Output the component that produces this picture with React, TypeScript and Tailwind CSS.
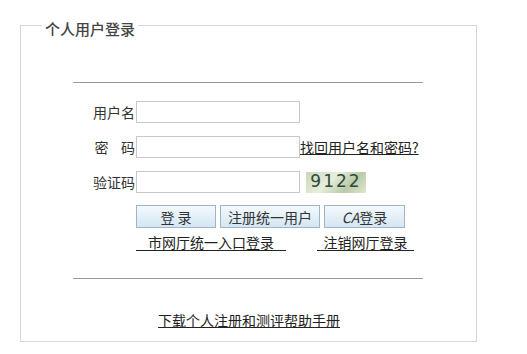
import React from "react";

const font = { fontFamily: '"SimSun", "Noto Sans CJK SC", sans-serif' };

function Field({ label, children }: { label: React.ReactNode; children?: React.ReactNode }) {
  return (
    <div className="flex h-[22px] items-center">
      <div className="w-[65px] text-right text-[14px] leading-none text-[#333] pr-[1px]">{label}</div>
      <input className="h-[22px] w-[164px] border border-[#c8c8c8] bg-white outline-none" />
      {children}
    </div>
  );
}

function Btn({ children, w }: { children: React.ReactNode; w: string }) {
  return (
    <button
      className={`h-[23px] ${w} border border-[#9fb6c8] bg-gradient-to-b from-[#f4f9fd] to-[#d4e6f3] text-[14px] leading-none text-[#333]`}
    >
      {children}
    </button>
  );
}

export default function App() {
  return (
    <div className="h-[354px] w-[527px] bg-white pt-[16px]" style={font}>
      <fieldset className="ml-[20px] h-[326px] w-[457px] border border-[#d6d6d6] px-0">
        <legend className="ml-[21px] px-[3px] text-[15px] leading-[18px] text-[#444] font-medium">
          <span className="inline-block translate-y-[4px]">个人用户登录</span>
        </legend>

        <div className="ml-[52px] mt-[48px] h-[2px] w-[350px] border-t border-[#9a9a9a]" />

        <div className="mt-[17px] ml-[50px] flex flex-col gap-[13px]">
          <Field label="用户名" />
          <Field label={<span>密&nbsp;&nbsp;&nbsp;&nbsp;码</span>}>
            <a className="text-[14px] leading-none text-[#222] underline">找回用户名和密码?</a>
          </Field>
          <Field label="验证码">
            <div
              className="ml-[6px] flex h-[21px] w-[60px] items-center justify-center bg-[linear-gradient(135deg,#c9d7b8,#e8eedc_40%,#b9cba8_70%,#dfe8d2)] text-[17px] tracking-[2px] text-[#2f4a3a]"
              style={{ fontFamily: '"DejaVu Sans", sans-serif' }}
            >
              9122
            </div>
          </Field>
        </div>

        <div className="ml-[115px] mt-[12px] flex gap-[4px]">
          <Btn w="w-[80px]">登 录</Btn>
          <Btn w="w-[100px]">注册统一用户</Btn>
          <Btn w="w-[81px]">
            <span className="italic">CA</span>登录
          </Btn>
        </div>

        <div className="ml-[115px] mt-[7px] flex text-[14px] leading-none text-[#222]">
          <a className="w-[150px] border-b border-[#222] pb-[1px] text-center">市网厅统一入口登录</a>
          <a className="ml-[31px] w-[97px] border-b border-[#222] pb-[1px] text-center">注销网厅登录</a>
        </div>

        <div className="ml-[52px] mt-[27px] h-[2px] w-[350px] border-t border-[#9a9a9a]" />

        <div className="mt-[27px] ml-[137px]">
          <a className="text-[14px] leading-none text-[#222] underline">下载个人注册和测评帮助手册</a>
        </div>
      </fieldset>
    </div>
  );
}
